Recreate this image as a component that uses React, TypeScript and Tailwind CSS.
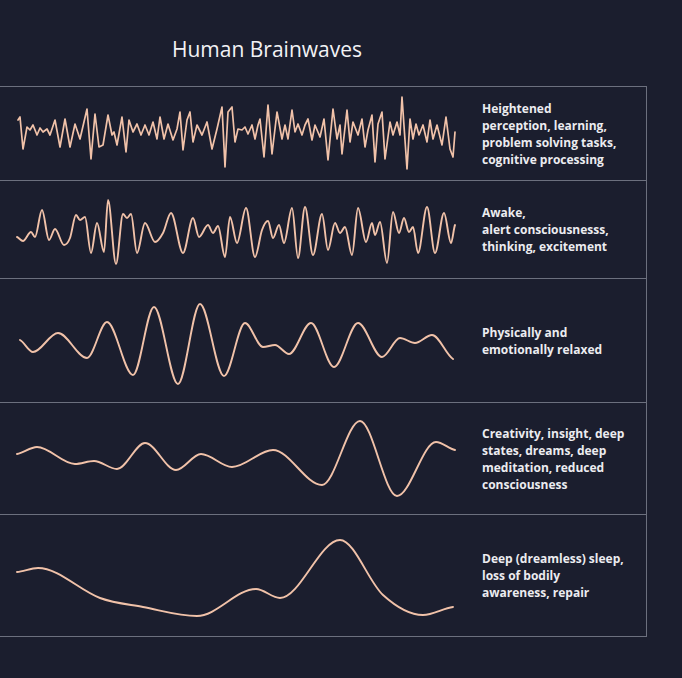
import React from "react";

type P = [number, number];

const WAVE = "#f1c2a9";

function smoothPath(pts: P[]): string {
  const n = pts.length;
  const m: number[] = pts.map((p, i) => {
    if (i === 0) return (pts[1][1] - p[1]) / (pts[1][0] - p[0]) * 0.5;
    if (i === n - 1) return (p[1] - pts[i - 1][1]) / (p[0] - pts[i - 1][0]) * 0.5;
    const a = pts[i - 1][1], b = p[1], c = pts[i + 1][1];
    if ((b <= a && b <= c) || (b >= a && b >= c)) return 0;
    return (c - a) / (pts[i + 1][0] - pts[i - 1][0]);
  });
  let d = `M${pts[0][0]},${pts[0][1]}`;
  for (let i = 0; i < n - 1; i++) {
    const [x0, y0] = pts[i];
    const [x1, y1] = pts[i + 1];
    const dx = (x1 - x0) / 3;
    d += ` C${(x0 + dx).toFixed(2)},${(y0 + m[i] * dx).toFixed(2)} ${(x1 - dx).toFixed(2)},${(y1 - m[i + 1] * dx).toFixed(2)} ${x1},${y1}`;
  }
  return d;
}

function polyPath(pts: P[]): string {
  return "M" + pts.map((p) => `${p[0]},${p[1]}`).join(" L");
}

const gamma: P[] = [
  [18, 120], [20, 117], [23, 149], [27, 127], [30, 130], [33, 125], [37, 135], [40, 128], [43, 132], [47, 129],
  [50, 135], [55, 120], [60, 147], [65, 119], [70, 147], [75, 124], [80, 139], [87, 109], [91, 159], [95, 114],
  [99, 147], [103, 145], [108, 115], [112, 135], [114, 132], [117, 145], [122, 117], [126, 152], [129, 120],
  [133, 132], [137, 124], [141, 135], [145, 125], [149, 135], [153, 122], [157, 139], [160, 117], [164, 139],
  [168, 124], [173, 140], [177, 129], [180, 112], [183, 150], [187, 120], [190, 112], [193, 142], [197, 125],
  [202, 135], [207, 122], [212, 149], [217, 129], [222, 107], [225, 167], [228, 112], [232, 107], [235, 142],
  [238, 129], [242, 130], [245, 127], [248, 134], [252, 125], [255, 139], [258, 125], [260, 119], [264, 157],
  [268, 105], [272, 154], [277, 112], [282, 139], [285, 125], [288, 139], [292, 110], [295, 132], [298, 124],
  [302, 135], [305, 125], [308, 119], [312, 140], [315, 125], [320, 137], [324, 119], [328, 160], [333, 109],
  [337, 139], [340, 125], [342, 154], [347, 110], [350, 142], [353, 122], [358, 135], [362, 119], [365, 147],
  [368, 130], [372, 115], [375, 162], [378, 124], [382, 112], [385, 159], [390, 122], [393, 135], [397, 122],
  [400, 135], [402, 97], [407, 169], [410, 119], [413, 139], [416, 124], [419, 135], [423, 125], [427, 142],
  [430, 120], [433, 139], [437, 125], [442, 145], [446, 117], [450, 149], [453, 157], [455, 132],
];

const beta: P[] = [
  [17, 237], [23, 241], [31, 232], [35, 237], [42, 210], [49, 240], [55, 229], [64, 245], [70, 238], [76, 215],
  [80, 220], [85, 217], [91, 253], [97, 223], [104, 252], [108, 200], [116, 264], [123, 214], [127, 218],
  [131, 214], [137, 253], [145, 223], [155, 242], [163, 233], [171, 213], [183, 253], [193, 218], [199, 237],
  [208, 225], [213, 233], [218, 226], [225, 257], [230, 217], [237, 243], [246, 208], [255, 257], [262, 230],
  [268, 221], [273, 238], [279, 225], [284, 243], [292, 208], [298, 258], [305, 207], [313, 255], [322, 214],
  [328, 250], [335, 223], [340, 233], [345, 227], [352, 255], [358, 208], [366, 242], [372, 223], [375, 235],
  [380, 222], [387, 263], [393, 212], [399, 233], [404, 218], [409, 232], [413, 227], [418, 253], [427, 207],
  [435, 253], [444, 213], [451, 243], [455, 225],
];

const alpha: P[] = [
  [20, 340], [33, 352], [58, 333], [87, 358], [107, 322], [133, 375], [154, 307], [178, 384], [200, 304],
  [224, 376], [245, 323], [263, 347], [275, 345], [289, 354], [311, 323], [334, 367], [358, 323], [382, 357],
  [400, 338], [415, 343], [432, 335], [453, 359],
];

const theta: P[] = [
  [17, 454], [37, 447], [75, 464], [94, 461], [117, 469], [145, 443], [176, 470], [201, 454], [232, 467],
  [273, 450], [322, 485], [360, 421], [397, 496], [436, 442], [455, 450],
];

const delta: P[] = [
  [17, 572], [38, 568], [100, 598], [143, 607], [197, 616], [256, 589], [280, 598], [340, 540],
  [383, 595], [423, 615], [453, 607],
];

type Row = {
  top: number;
  h: number;
  d: string;
  sw: number;
  lines: string[];
};

const rows: Row[] = [
  {
    top: 87,
    h: 93,
    d: polyPath(gamma),
    sw: 1.7,
    lines: ["Heightened", "perception, learning,", "problem solving tasks,", "cognitive processing"],
  },
  {
    top: 181,
    h: 97,
    d: smoothPath(beta),
    sw: 1.9,
    lines: ["Awake,", "alert consciousnesss,", "thinking, excitement"],
  },
  {
    top: 279,
    h: 123,
    d: smoothPath(alpha),
    sw: 1.9,
    lines: ["Physically and", "emotionally relaxed"],
  },
  {
    top: 403,
    h: 111,
    d: smoothPath(theta),
    sw: 1.9,
    lines: ["Creativity, insight, deep", "states, dreams, deep", "meditation, reduced", "consciousness"],
  },
  {
    top: 515,
    h: 121,
    d: smoothPath(delta),
    sw: 1.9,
    lines: ["Deep (dreamless) sleep,", "loss of bodily", "awareness, repair"],
  },
];

export default function App() {
  return (
    <div className="h-[678px] w-[682px] overflow-hidden bg-[#1b1e2e] font-['Open_Sans',sans-serif]">
      <div className="h-[86px] pl-[172px] pt-[35px]">
        <h1 className="text-[21px] font-normal leading-[28px] text-[#f2f2f5]">Human Brainwaves</h1>
      </div>
      <div className="w-[647px] border-t border-r border-[#6c707e]">
        {rows.map((r, i) => (
          <div key={i} className="flex border-b border-[#6c707e]" style={{ height: r.h + 1 }}>
            <svg
              width={470}
              height={r.h}
              viewBox={`0 ${r.top} 470 ${r.h}`}
              className="shrink-0"
            >
              <path
                d={r.d}
                fill="none"
                stroke={WAVE}
                strokeWidth={r.sw}
                strokeLinejoin="round"
                strokeLinecap="round"
              />
            </svg>
            <div className="flex flex-1 items-center pl-[12px]">
              <p className="whitespace-nowrap text-[12px] font-bold leading-[17px] text-[#ececf0]">
                {r.lines.map((l, j) => (
                  <React.Fragment key={j}>
                    {l}
                    {j < r.lines.length - 1 && <br />}
                  </React.Fragment>
                ))}
              </p>
            </div>
          </div>
        ))}
      </div>
    </div>
  );
}
